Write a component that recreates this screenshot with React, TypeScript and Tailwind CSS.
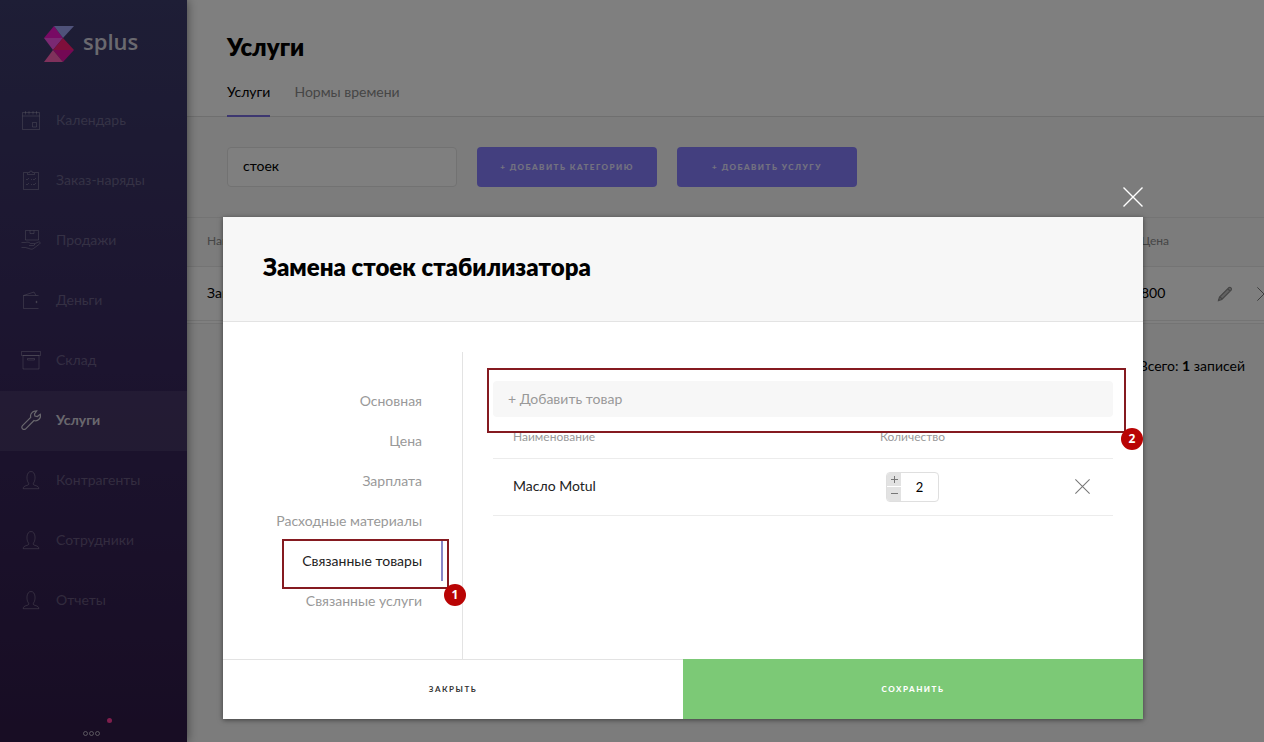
import React, { useState } from 'react';
import clsx from 'clsx';

type IconName = 'calendar' | 'orders' | 'sales' | 'money' | 'stock' | 'wrench' | 'person';

const MENU: { title: string; icon: IconName }[] = [
  { title: 'Календарь', icon: 'calendar' },
  { title: 'Заказ-наряды', icon: 'orders' },
  { title: 'Продажи', icon: 'sales' },
  { title: 'Деньги', icon: 'money' },
  { title: 'Склад', icon: 'stock' },
  { title: 'Услуги', icon: 'wrench' },
  { title: 'Контрагенты', icon: 'person' },
  { title: 'Сотрудники', icon: 'person' },
  { title: 'Отчеты', icon: 'person' },
];

const SECTIONS = ['Основная', 'Цена', 'Зарплата', 'Расходные материалы', 'Связанные товары', 'Связанные услуги'];

function MenuIcon({ name }: { name: IconName }) {
  return (
    <svg className="size-5 shrink-0" viewBox="0 0 20 20" fill="none" stroke="currentColor" strokeWidth="1" aria-hidden="true">
      {name === 'calendar' && (
        <>
          <path d="M1.5 2.5h17v17h-17z M1.5 6h17 M11.5 12.5h4v4.500h-4z" />
          <path d="M4.500 1v3.500 M8 1v3.500 M12 1v3.500 M15.500 1v3.500" />
        </>
      )}
      {name === 'orders' && (
        <>
          <path d="M6 2.500H2.500v17h15v-17H14" />
          <path d="M6.500 4.500v-2h2a1.500 1.500 0 0 1 3 0h2v2z" />
          <path d="M5 9l1 1 2-2 M10 9.500h1 M12 9l1 1 2-2 M5 14l1 1 2-2 M10 14.500h1 M12 14l1 1 2-2" />
        </>
      )}
      {name === 'sales' && (
        <>
          <path d="M4.500 .5h13v9.500h-13z M9 .5v3h4v-3" />
          <path d="M.5 12.500h4c2-1 4 0 5 1h3c1.500 0 1.500 2 0 2H8 M13 14l4.500-2c1.500-.5 2.500 1 1 2l-6 4.500c-1 .7-2 .8-3 .5l-5-1.500h-4" />
        </>
      )}
      {name === 'money' && (
        <>
          <path d="M17.500 5.500h-15v13h15 M2.500 5.500L13 2l2 3.500" />
          <circle cx="15.500" cy="12" r=".7" fill="currentColor" />
        </>
      )}
      {name === 'stock' && <path d="M.5 1.500h19v4H.5z M2 5.500h16v13.500H2z M6.500 8.500h7v1.500h-7z" />}
      {name === 'wrench' && (
        <path d="M13.500 1.200a5 5 0 0 1 2.200-.4l-2.200 3 .4 2.300 2.400.5 3-2.300a5 5 0 0 1-6.300 6.200l-8.300 8.300a2.200 2.200 0 0 1-3.200-3.200l8.200-8.300a5 5 0 0 1 3.800-6.100z" strokeWidth="1.200" />
      )}
      {name === 'person' && (
        <path d="M7.500 13C5 10 5.300 1.500 10 1.500S15 10 12.500 13c-.7 1.200 0 2 1.500 2.400 2.500.7 3.800 1.300 3.800 3.300H2.200c0-2 1.300-2.600 3.800-3.300 1.500-.4 2.200-1.200 1.500-2.400z" />
      )}
    </svg>
  );
}

function Cross({ className }: { className: string }) {
  return (
    <svg className={className} viewBox="0 0 20 20" fill="none" stroke="currentColor" strokeWidth="1.400" aria-hidden="true">
      <path d="M.5 .5l19 19 M19.500 .5l-19 19" />
    </svg>
  );
}

function Logo() {
  return (
    <a href="#" className="flex h-[91px] items-start gap-[9px] pt-[26px] pl-11 text-[#d4d3de]">
      <svg className="h-9 w-[30px]" viewBox="0 0 30 36" aria-hidden="true">
        <path d="M0 12L10 0l9 12z" fill="#f014c8" />
        <path d="M10 0h20L19 12z" fill="#9ea4f5" />
        <path d="M0 12h19L9 24z" fill="#f553e4" />
        <path d="M19 12l11 12H9z" fill="#ff1f76" />
        <path d="M9 24h21L19 36z" fill="#e810a8" />
        <path d="M9 24l10 12H0z" fill="#ff62b8" />
      </svg>
      <span className="font-['Open_Sans',sans-serif] text-[22px] leading-[30px] font-semibold">splus</span>
    </a>
  );
}

function Sidebar() {
  return (
    <aside className="relative z-10 flex w-[187px] shrink-0 flex-col bg-linear-to-b from-[#3c3c6c] via-[#38285e] to-[#301a48] shadow-[0_0_10px_rgba(0,0,0,0.5)]">
      <Logo />
      <nav>
        {MENU.map((item) => {
          const active = item.title === 'Услуги';
          return (
            <a
              key={item.title}
              href="#"
              className={clsx(
                'flex h-[60px] items-center gap-[15px] pb-0.5 pl-[21px] text-[14px]',
                active ? 'bg-white/8 font-bold text-[#d4d0dc]' : 'text-white/25',
              )}
            >
              <MenuIcon name={item.icon} />
              {item.title}
            </a>
          );
        })}
      </nav>
      <div className="mt-auto flex flex-col pb-1.5 pl-[83px]">
        <span className="mb-2 ml-6 size-[5px] rounded-full bg-[#ff3d9a]" />
        <div className="flex gap-px">
          <span className="size-[5px] rounded-full border border-white/60" />
          <span className="size-[5px] rounded-full border border-white/60" />
          <span className="size-[5px] rounded-full border border-white/60" />
        </div>
      </div>
    </aside>
  );
}

function ServicesPage() {
  const [query, setQuery] = useState('стоек');

  return (
    <main className="min-w-0 flex-1 overflow-hidden bg-[#f9f9f9]">
      <header className="border-b border-[#dedede] bg-white px-10 pt-[29px]">
        <h1 className="text-[24px] leading-9 font-extrabold">Услуги</h1>
        <div className="mt-2 flex gap-6 text-[14px]">
          <a href="#" className="-mb-px flex h-11 items-center border-b-2 border-[#7a6fe0] pb-1">Услуги</a>
          <a href="#" className="flex h-[42px] items-center pb-1 text-[#8c8c8c]">Нормы времени</a>
        </div>
      </header>

      <div className="flex gap-5 px-10 py-[30px]">
        <input
          aria-label="Поиск"
          value={query}
          onChange={(e) => setQuery(e.target.value)}
          className="h-10 w-[230px] rounded border border-[#e4e4e4] bg-white px-[15px] pb-1 text-[14px] outline-none"
        />
        <button className="h-10 w-[180px] rounded bg-[#877eff] text-[8px] font-black tracking-[1.5px] text-white/80">+ ДОБАВИТЬ КАТЕГОРИЮ</button>
        <button className="h-10 w-[180px] rounded bg-[#877eff] text-[8px] font-black tracking-[1.5px] text-white/80">+ ДОБАВИТЬ УСЛУГУ</button>
      </div>

      <table className="w-full min-w-[1179px] table-fixed border-y border-[#e8e8e8] bg-white text-left">
        <thead>
          <tr className="h-[49px] border-b border-[#e8e8e8] bg-[#f9f9f9] text-[12px] text-[#8c8c8c]">
            <th className="pb-0.5 pl-5 font-normal">Наименование</th>
            <th className="w-[76px] pb-0.5 font-normal">Цена</th>
            <th className="w-10" />
            <th className="w-[109px]" />
          </tr>
        </thead>
        <tbody>
          <tr className="h-[54px] text-[14px]">
            <td className="pb-0.5 pl-5">Замена стоек стабилизатора</td>
            <td className="pb-0.5">800</td>
            <td>
              <button aria-label="Изменить" className="block text-[#8c8c8c]">
                <svg className="size-4" viewBox="0 0 16 16" fill="none" stroke="currentColor" strokeWidth="1.200" aria-hidden="true">
                  <path d="M1.500 14.500l1-3.500 9.500-9.500c1.500-.7 3 .8 2.300 2.300L4.800 13.500z M11 3l2 2 M3 11l2 2" fill="#c4c4c4" />
                </svg>
              </button>
            </td>
            <td>
              <button aria-label="Удалить" className="block text-[#777]">
                <Cross className="size-[14px]" />
              </button>
            </td>
          </tr>
        </tbody>
      </table>
      <div className="h-[3px] border-b border-[#e8e8e8] bg-white" />

      <p className="px-[19px] pt-8 text-right text-[14px]">
        Всего: <b>1</b> записей
      </p>
    </main>
  );
}

function Marker({ value }: { value: number }) {
  return (
    <span className="absolute -right-[19px] -bottom-[19px] flex size-[22px] items-center justify-center rounded-full bg-[#b90404] font-['Open_Sans',sans-serif] text-[12px] font-bold text-white">
      {value}
    </span>
  );
}

function ServiceDialog() {
  const [section, setSection] = useState('Связанные товары');
  const [count, setCount] = useState(2);

  return (
    <div role="dialog" aria-label="Замена стоек стабилизатора" className="relative w-full max-w-[920px] bg-white shadow-[0_1px_5px_rgba(0,0,0,0.5)]">
      <button aria-label="Закрыть окно" className="absolute -top-[30px] right-0 text-white">
        <Cross className="size-5" />
      </button>

      <div className="border-b border-[#e3e3e3] bg-[#f7f7f7] px-10 pt-8 pb-9">
        <h2 className="text-[24px] leading-9 font-extrabold">Замена стоек стабилизатора</h2>
      </div>

      <div className="flex pt-[30px]">
        <nav className="w-60 shrink-0 border-r border-[#e3e3e3] pt-[29px] pb-[38px]">
          {SECTIONS.map((title) => {
            const active = title === section;
            return (
              <div key={title} className="relative flex justify-end pr-[19px]">
                <button
                  onClick={() => setSection(title)}
                  className={clsx(
                    'h-10 border-r-2 pr-[19px] text-[14px]',
                    active ? 'border-[#8787c8] text-[#222]' : 'border-transparent text-[#999]',
                  )}
                >
                  {title}
                </button>
                {title === 'Связанные товары' && (
                  <span className="pointer-events-none absolute -top-[2px] right-[13px] h-[50px] w-[167px] border-2 border-[#851a20]">
                    <Marker value={1} />
                  </span>
                )}
              </div>
            );
          })}
        </nav>

        <section className="flex-1 px-[30px] pt-[29px]">
          <div className="relative">
            <input
              aria-label="Добавить товар"
              placeholder="+ Добавить товар"
              className="block h-9 w-full rounded-sm bg-[#f7f7f7] px-[15px] pb-0.5 text-[14px] outline-none placeholder:text-[#999]"
            />
            <span className="pointer-events-none absolute -top-[13px] -right-[13px] -left-[6px] h-[65px] border-2 border-[#851a20]">
              <Marker value={2} />
            </span>
          </div>
          <table className="w-full text-left">
            <thead>
              <tr className="h-[41px] border-b border-[#ececec] text-[12px] text-[#999]">
                <th className="pl-5 font-normal">Наименование</th>
                <th className="w-[105px] text-center font-normal">Количество</th>
                <th className="w-[148px]" />
              </tr>
            </thead>
            <tbody>
              <tr className="h-[57px] border-b border-[#ececec]">
                <td className="pb-0.5 pl-5 text-[14px] text-[#222]">Масло Motul</td>
                <td>
                  <div className="mx-auto flex h-[30px] w-[53px] overflow-hidden rounded border border-[#dfdfdf]">
                    <div className="flex w-[14px] shrink-0 flex-col gap-px text-[#777]">
                      <button aria-label="Больше" onClick={() => setCount(count + 1)} className="flex flex-1 items-center justify-center bg-[#e2e2e2]">
                        <svg className="size-[7px]" viewBox="0 0 7 7" stroke="currentColor" aria-hidden="true"><path d="M0 3.500h7M3.500 0v7" /></svg>
                      </button>
                      <button aria-label="Меньше" onClick={() => setCount(Math.max(0, count - 1))} className="flex flex-1 items-center justify-center bg-[#e2e2e2]">
                        <svg className="size-[7px]" viewBox="0 0 7 7" stroke="currentColor" aria-hidden="true"><path d="M0 3.500h7" /></svg>
                      </button>
                    </div>
                    <input
                      aria-label="Количество"
                      value={count}
                      onChange={(e) => setCount(Number(e.target.value) || 0)}
                      className="w-full min-w-0 text-center text-[13px] outline-none"
                    />
                  </div>
                </td>
                <td className="pr-[23px]">
                  <button aria-label="Удалить товар" className="ml-auto block text-[#777]">
                    <Cross className="size-[15px]" />
                  </button>
                </td>
              </tr>
            </tbody>
          </table>
        </section>
      </div>

      <div className="flex h-[60px] text-[8px] font-black tracking-[1.5px]">
        <button className="flex-1 border-t border-[#e3e3e3] pb-0.5 font-bold text-[#333]">ЗАКРЫТЬ</button>
        <button className="flex-1 bg-[#7cc976] text-white">СОХРАНИТЬ</button>
      </div>
    </div>
  );
}

export default function App() {
  return (
    <div className="relative flex min-h-screen overflow-hidden font-[Lato,sans-serif] leading-5 text-black">
      <Sidebar />
      <ServicesPage />
      <div className="absolute inset-0 z-20 flex items-start justify-center bg-black/50 pt-[217px] pl-[102px]">
        <ServiceDialog />
      </div>
    </div>
  );
}
